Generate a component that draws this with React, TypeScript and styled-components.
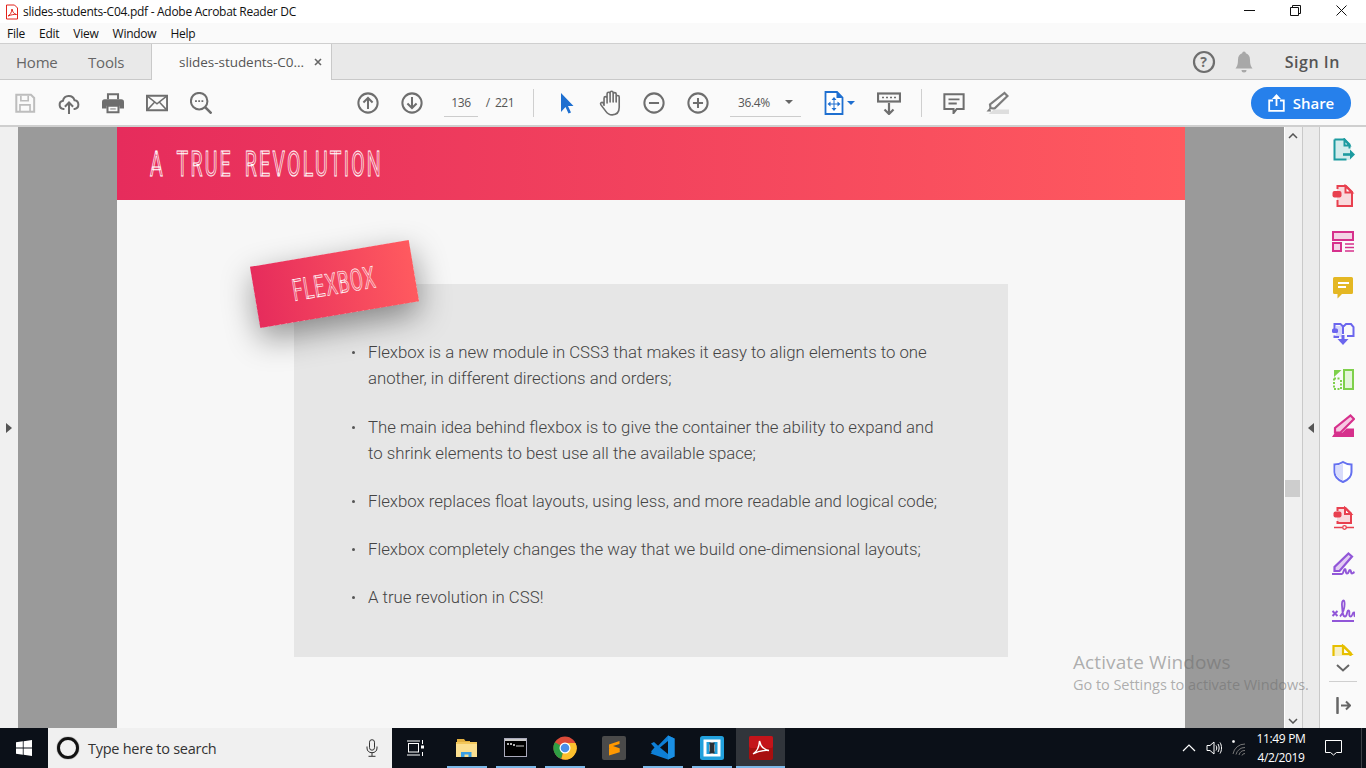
import React from "react";
import styled, { createGlobalStyle } from "styled-components";

const Global = createGlobalStyle`
  html, body { margin: 0; padding: 0; width: 1366px; height: 768px; overflow: hidden; background: #fff; }
  * { box-sizing: border-box; }
  body { font-family: "Open Sans", "Noto Sans", sans-serif; }
  svg { display: block; flex: none; }
`;

const Shell = styled.div`
  width: 1366px; height: 768px; display: flex; flex-direction: column; position: relative; overflow: hidden;
`;

/* Title bar */
const TitleBar = styled.div`
  height: 23px; background: #fff; display: flex; align-items: center; padding-left: 4px; flex: none;
`;
const TitleText = styled.span`
  margin-left: 3px; font-size: 12px; color: #111; letter-spacing: -0.28px; white-space: nowrap;
`;
const WindowControls = styled.div`
  margin-left: auto; display: flex; align-items: center; padding-right: 2px;
`;
const WindowButton = styled.div`
  width: 46px; height: 23px; display: flex; align-items: center; justify-content: center;
  position: relative; top: -1px; color: #111;
`;

/* Menu bar */
const MenuBar = styled.div`
  height: 21px; background: #fafafa; display: flex; align-items: center; gap: 14px; padding-left: 7px; flex: none;
  border-bottom: 1px solid #cfcfcf;
`;
const MenuItem = styled.span`
  font-size: 12px; color: #111; letter-spacing: -0.25px;
`;

/* Tabs */
const TabBar = styled.div`
  height: 36px; background: #e9e9e9; display: flex; align-items: stretch; flex: none; border-bottom: 1px solid #c9c9c9;
`;
const NavTab = styled.div<{ $w: number }>`
  width: ${p => p.$w}px; display: flex; align-items: center; font-size: 15px; color: #666; padding-left: 16px; letter-spacing: -0.2px;
`;
const DocTab = styled.div`
  width: 181px; height: 36px; background: #fafafa; border-left: 1px solid #c9c9c9; border-right: 1px solid #c9c9c9;
  display: flex; align-items: center; padding-left: 27px; font-size: 13.5px; color: #555; gap: 10px; letter-spacing: -0.05px; white-space: nowrap;
`;
const TabRight = styled.div`
  margin-left: auto; display: flex; align-items: center; padding-right: 26px;
`;
const SignIn = styled.span`
  font-size: 16px; font-weight: 600; color: #555; margin-left: 29px; letter-spacing: 0.55px;
`;

/* Toolbar */
const Toolbar = styled.div`
  height: 47px; background: #fafafa; border-bottom: 2px solid #cfcfcf; display: flex; align-items: center; padding-left: 3px; flex: none;
`;
const ToolSlot = styled.div<{ $w?: number; $ml?: number }>`
  width: ${p => p.$w ?? 44}px; margin-left: ${p => p.$ml ?? 0}px; height: 32px; display: flex; align-items: center; justify-content: center; flex: none; gap: 3px;
`;
const PageField = styled.div`
  width: 34px; margin-left: 10px; height: 29px; border-bottom: 1px solid #ccc; font-size: 12px; color: #555; display: flex; align-items: center; justify-content: center; letter-spacing: -0.4px;
`;
const PageTotal = styled.span`
  margin-left: 5px; width: 37px; font-size: 12px; color: #555; letter-spacing: -0.45px; white-space: pre; height: 29px; display: flex; align-items: center;
`;
const ToolSep = styled.div<{ $ml: number }>`
  width: 1px; height: 28px; background: #cfcfcf; margin-left: ${p => p.$ml}px; flex: none;
`;
const ZoomField = styled.div`
  width: 71px; margin-left: 10px; height: 29px; border-bottom: 1px solid #ccc; font-size: 12px; color: #555; display: flex; align-items: center; justify-content: space-between; padding: 0 8px 0 8px; letter-spacing: -0.4px; flex: none;
`;
const Caret = styled.span<{ $c: string }>`
  width: 0; height: 0; border-left: 4px solid transparent; border-right: 4px solid transparent; border-top: 4px solid ${p => p.$c}; flex: none;
`;
const ShareButton = styled.div`
  margin-left: auto; margin-right: 15px; width: 100px; height: 32px; border-radius: 16px; background: #2680eb; color: #fff;
  font-size: 15px; font-weight: 600; display: flex; align-items: center; justify-content: center; gap: 8px; letter-spacing: -0.05px;
`;

/* Main */
const Main = styled.div`
  flex: 1; display: flex; min-height: 0; position: relative;
`;
const LeftRail = styled.div`
  width: 18px; background: #f0f0f0; display: flex; align-items: center; justify-content: center; flex: none;
`;
const RailArrow = styled.span<{ $dir: "left" | "right" }>`
  width: 0; height: 0; border-top: 5.5px solid transparent; border-bottom: 5.5px solid transparent;
  ${p => p.$dir === "right" ? "border-left: 6px solid #555;" : "border-right: 6px solid #555;"}
`;
const DocArea = styled.div`
  width: 1266px; background: #9a9a9a; display: flex; justify-content: flex-start; padding-left: 99px; flex: none; overflow: hidden;
`;
const Page = styled.div`
  width: 1068px; background: #f7f7f7; display: flex; flex-direction: column; flex: none;
`;
const SlideHeader = styled.div`
  height: 73px; flex: none; background: linear-gradient(90deg, #e62c5c 0%, #ff5a5f 100%); display: flex; align-items: center; padding-left: 33px;
`;
const SlideTitle = styled.h1`
  margin: 0; font-family: "Roboto", sans-serif; font-weight: 400; font-size: 35px; line-height: 1; color: rgba(255,255,255,.15);
  -webkit-text-stroke: 0.95px #fff; letter-spacing: 4px; word-spacing: 8.7px; transform: scaleX(0.558); transform-origin: left center; white-space: pre;
  position: relative; top: 1px;
`;
const SlideBody = styled.div`
  flex: 1; position: relative; padding: 84px 0 0 177px;
`;
const Card = styled.div`
  width: 714px; height: 373px; background: #e6e6e6; padding: 55px 50px 0 56px; flex: none;
`;
const BulletList = styled.ul`
  margin: 0; padding: 0; list-style: none; display: flex; flex-direction: column; gap: 22px;
`;
const Bullet = styled.li`
  position: relative; padding-left: 18px; font-family: "Roboto", sans-serif; font-weight: 300; font-size: 16.77px; line-height: 26px; color: #444; width: 620px;
  &::before { content: ""; position: absolute; left: 2px; top: 12px; width: 3px; height: 3px; border-radius: 50%; background: #555; }
  &:nth-child(2) { margin-top: 1px; }
`;
const Badge = styled.div`
  position: absolute; left: 137px; top: 53px; width: 161px; height: 62px; transform: rotate(-9.6deg);
  background: linear-gradient(90deg, #e62c5c 0%, #ff5a5f 100%);
  box-shadow: 0 12px 32px rgba(0,0,0,.42);
  display: flex; align-items: center; justify-content: center;
`;
const BadgeText = styled.span`
  font-family: "Roboto", sans-serif; font-size: 30px; color: rgba(255,255,255,.15); -webkit-text-stroke: 0.7px #fff; letter-spacing: 1.4px; transform: scaleX(0.62); white-space: nowrap; line-height: 1;
`;
const Watermark = styled.div`
  position: absolute; left: 1073px; top: 523px; color: rgba(110,110,110,.55); pointer-events: none; white-space: nowrap; z-index: 5;
`;
const WatermarkBig = styled.div` font-size: 19px; line-height: 24px; letter-spacing: 0.1px; `;
const WatermarkSmall = styled.div` font-size: 14.5px; line-height: 20px; margin-top: 1px; letter-spacing: -0.05px; `;

const ScrollTrack = styled.div`
  width: 17px; background: #f0f0f0; display: flex; flex-direction: column; align-items: center; flex: none; position: relative; margin-left: 1px;
  justify-content: space-between; padding: 6px 1px 4px 0;
`;
const ScrollThumb = styled.div`
  position: absolute; left: 0; top: 353px; width: 15px; height: 17px; background: #cdcdcd;
`;
const CollapseStrip = styled.div`
  width: 18px; background: #ebebeb; border-left: 1px solid #c9c9c9; border-right: 1px solid #c9c9c9; display: flex; align-items: center; justify-content: center; flex: none;
`;
const ToolsPanel = styled.div`
  flex: 1; background: #fafafa; display: flex; flex-direction: column; align-items: stretch;
`;
const ToolsList = styled.div`
  height: 529px; overflow: hidden; flex: none;
`;
const ToolTile = styled.div`
  height: 46px; display: flex; align-items: center; justify-content: center;
`;
const PanelFoot = styled.div`
  flex: 1; display: flex; flex-direction: column; align-items: center; padding-top: 8px;
`;
const PanelRule = styled.div`
  width: 28px; height: 1px; background: #cfcfcf; margin: 9px 0 15px;
`;

/* Taskbar */
const Taskbar = styled.div`
  height: 40px; background: #0b1018; display: flex; align-items: stretch; flex: none; color: #fff; position: relative;
`;
const StartButton = styled.div`
  width: 48px; display: flex; align-items: center; justify-content: center; flex: none;
`;
const SearchBox = styled.div`
  width: 344px; background: #f0f0f0; display: flex; align-items: center; padding-left: 9px; flex: none;
`;
const CortanaRing = styled.div`
  width: 22px; height: 22px; border-radius: 50%; border: 3px solid #111; flex: none; box-shadow: 0 0 1px #000;
`;
const SearchText = styled.span`
  margin-left: 9px; font-size: 14.5px; color: #333; letter-spacing: -0.26px; flex: 1; white-space: nowrap;
`;
const MicSlot = styled.div`
  width: 24px; margin-right: 8px; display: flex; justify-content: center; flex: none;
`;
const TaskSlot = styled.div<{ $w: number; $active?: boolean; $line?: number; $pr?: number }>`
  width: ${p => p.$w}px; flex: none; display: flex; align-items: center; justify-content: center; position: relative;
  padding-bottom: 1px; padding-right: ${p => p.$pr ?? 0}px;
  background: ${p => p.$active ? "#31353b" : "transparent"};
  ${p => p.$line ? `&::after { content: ""; position: absolute; bottom: 0; left: 50%; margin-left: -${p.$line / 2}px; width: ${p.$line}px; height: 2px; background: #7cb8e8; }` : ""}
`;
const Tray = styled.div`
  margin-left: auto; display: flex; align-items: center; flex: none; padding-right: 4px; position: relative;
`;
const TrayIcon = styled.div<{ $w: number }>`
  width: ${p => p.$w}px; display: flex; justify-content: center; align-items: center; flex: none;
`;
const Clock = styled.div`
  width: 62px; margin-right: 4px; font-size: 12px; line-height: 19px; text-align: center; color: #fff; letter-spacing: -0.35px; white-space: nowrap;
`;
const TrayEdge = styled.div`
  width: 1px; height: 40px; background: #3c4046; margin-left: 11px;
`;

/* ---------- icons ---------- */
const I = ({ s = 24, h, children }: { s?: number; h?: number; children: React.ReactNode }) => (
  <svg width={s} height={h ?? s} viewBox="0 0 24 24" fill="none">{children}</svg>
);
const T = ({ children }: { children: React.ReactNode }) => <I s={22}>{children}</I>;
const G = "#6e6e6e";

const PdfMini = () => (
  <svg width="16" height="16" viewBox="0 0 16 16" fill="none">
    <path d="M2.5 1h8l3 3v11h-11z" fill="#fff" stroke="#e2231a" />
    <path d="M4 12c2-1 3.5-3 4-7 .5 3 2 5 4.5 5.5-2.500-.3-5 .2-8.500 1.500z" stroke="#e2231a" strokeWidth="1" fill="none" />
  </svg>
);

const Ic = {
  Save: () => (<T><path d="M2.500 3h16l3.500 3.500V21.500H2.500z" stroke="#bdbdbd" strokeWidth="2.200" /><path d="M7.500 4v5.500h8V4M6.500 21v-7h11v7" stroke="#bdbdbd" strokeWidth="1.800" /></T>),
  Upload: () => (<T><path d="M7 18.500H6a4.500 4.500 0 0 1-.6-8.900 6.500 6.500 0 0 1 12.600-.6 4.800 4.800 0 0 1 .2 9.500H17" stroke={G} strokeWidth="2.200" /><path d="M12 24V12M7.500 16l4.500-4.500 4.500 4.500" stroke={G} strokeWidth="2.200" /></T>),
  Print: () => (<T><path d="M6.500 8V2.500h11V8" stroke={G} strokeWidth="2.200" /><path d="M3 8h18a3 3 0 0 1 3 3v7h-5v-3H5v3H0v-7a3 3 0 0 1 3-3z" fill={G} /><path d="M6 15h12v7H6z" stroke={G} strokeWidth="2.200" /><path d="M9 18.500h6" stroke={G} /></T>),
  Mail: () => (<T><path d="M1 4h22v16H1z" stroke={G} strokeWidth="2.200" /><path d="M1.500 4.500 12 13l10.500-8.500M1.500 19.500l8-8.500M22.500 19.500l-8-8.500" stroke={G} strokeWidth="1.600" /></T>),
  Search: () => (<T><circle cx="10" cy="10" r="9" stroke={G} strokeWidth="2.200" /><path d="m16.500 16.500 7 7" stroke={G} strokeWidth="2.800" /><path d="M5.500 10h2M9 10h2M12.500 10h2" stroke={G} strokeWidth="2" /></T>),
  Up: () => (<T><circle cx="12" cy="12" r="10.500" stroke={G} strokeWidth="2.200" /><path d="M12 18.500V6.500M7 11.500l5-5 5 5" stroke={G} strokeWidth="2.200" /></T>),
  Down: () => (<T><circle cx="12" cy="12" r="10.500" stroke={G} strokeWidth="2.200" /><path d="M12 5.500v12M7 12.500l5 5 5-5" stroke={G} strokeWidth="2.200" /></T>),
  Cursor: () => (<I><path d="M7 2v19l4.500-5 3 6.500 2.500-1-3-6.500H19.500z" fill="#1e6fd0" /></I>),
  Hand: () => (<I s={26}><path d="M6.500 14V7.500a1.400 1.400 0 0 1 2.800 0V12M9.300 11V3.500a1.400 1.400 0 0 1 2.800 0V11M12.100 11V2.500a1.400 1.400 0 0 1 2.800 0V11M14.900 11V3.800a1.400 1.400 0 0 1 2.800 0V11M17.700 11V6.500a1.400 1.400 0 0 1 2.800 0V16c0 4.500-2.500 7-6.500 7-3 0-4.500-1.200-6-3.500l-4.500-6c-.8-1.500 1-2.800 2.200-1.700L6.500 14" stroke={G} strokeWidth="1.500" strokeLinecap="round" /></I>),
  Minus: () => (<T><circle cx="12" cy="12" r="10.500" stroke={G} strokeWidth="2.200" /><path d="M6.500 12h11" stroke={G} strokeWidth="2.200" /></T>),
  Plus: () => (<T><circle cx="12" cy="12" r="10.500" stroke={G} strokeWidth="2.200" /><path d="M6.500 12h11M12 6.500v11" stroke={G} strokeWidth="2.200" /></T>),
  Fit: () => (<svg width="20" height="24" viewBox="0 0 20 24" fill="none"><path d="M1.500 1h11.500l5.500 5.500V23H1.500z" fill="#fff" stroke="#1e6fd0" strokeWidth="1.800" /><path d="M12.500 1v6h6z" fill="#1e6fd0" /><path d="M10 8v10M5 13h10" stroke="#1e6fd0" strokeWidth="1" /><path d="m10 6 2.500 3h-5zM10 20l2.500-3h-5zM3.500 13 6.500 10.500v5zM16.500 13l-3-2.500v5z" fill="#1e6fd0" /></svg>),
  Stamp: () => (<I><rect x="1" y="2.500" width="22" height="8" stroke={G} strokeWidth="2.200" /><path d="M5 6.500h2M9 6.500h2M13 6.500h2M17 6.500h2" stroke={G} strokeWidth="1.600" /><path d="M12 12v11M7.500 18.500 12 23l4.500-4.500" stroke={G} strokeWidth="2.200" /></I>),
  Comment: () => (<T><path d="M1.500 2.500h21v16h-7.500l-3.500 4.500v-4.500h-10z" stroke={G} strokeWidth="2.200" /><path d="M6 8h12M6 12.500h9" stroke={G} strokeWidth="2" /></T>),
  Marker: () => (<I><path d="M19.500 2l3 3-13 12.500-4-.5-.5-3.500z" stroke="#7d7d7d" strokeWidth="2.200" /><path d="M5 16.500 1.500 20.500h4.500z" fill="#7d7d7d" /><path d="M9 18.500h15V23H3.500z" fill="#dedede" /></I>),
  Help: () => (<I><circle cx="12" cy="12" r="10" stroke={G} strokeWidth="2.200" /></I>),
  Bell: () => (<I><path d="M12 1.500a1.800 1.800 0 0 1 1.800 1.800c3 .9 4.200 3.200 4.200 6.700 0 4.500 1 6.500 2.500 8.500h-17C5 16.500 6 14.500 6 10c0-3.500 1.200-5.800 4.200-6.700A1.800 1.800 0 0 1 12 1.500z" fill="#a8a8a8" /><path d="M9.500 20a2.500 2.500 0 0 0 5 0z" fill="#a8a8a8" /></I>),
  Share: () => (<svg width="17" height="18" viewBox="0 0 17 18" fill="none"><path d="M5 6.500H1.200v10.300h14.600V6.500H12" stroke="#fff" strokeWidth="1.800" /><path d="M8.500 12V1.500" stroke="#fff" strokeWidth="1.800" /><path d="M8.500 0 13 5H4z" fill="#fff" /></svg>),
};

const Side = {
  Export: () => (<I><path d="M4 2h9l6 6v14H4z" fill="#d3ecec" /><path d="M3.500 1.500h10l5 5v4M3.500 1.500v20h12" stroke="#1d9ba0" strokeWidth="2" /><path d="M13.500 1.500v6h5z" stroke="#1d9ba0" strokeWidth="2" fill="#fff" /><path d="M12 16.500h8" stroke="#1d9ba0" strokeWidth="2.600" /><path d="M19 11.500l5 5-5 5z" fill="#1d9ba0" /></I>),
  Create: () => (<I><path d="M6 5V2h9l6 6v14H6v-6" fill="#f9d9dc" /><path d="M6.500 5V2h8.500l6 6v14H6.500v-6" stroke="#e8404f" strokeWidth="2" /><path d="M14.500 2v6.500H21z" stroke="#e8404f" strokeWidth="2" fill="#fff" /><rect x="1.500" y="7" width="9" height="6.500" rx="2" fill="#e8404f" /></I>),
  Edit: () => (<I><rect x="2" y="2" width="20" height="8" stroke="#d6308c" strokeWidth="2" fill="#f4d3e6" /><rect x="2" y="13" width="8" height="8" stroke="#d6308c" strokeWidth="2" fill="#f4d3e6" /><path d="M14 14h9M14 17.500h9M14 21h9" stroke="#d6308c" strokeWidth="1.400" /></I>),
  Note: () => (<I><path d="M3.500 1h17A1.500 1.500 0 0 1 22 2.500v14a1.500 1.500 0 0 1-1.500 1.500H11l-4.500 4.500V18h-3A1.500 1.500 0 0 1 2 16.500v-14A1.500 1.500 0 0 1 3.500 1z" fill="#e4b723" /><path d="M7 7h11M7 11h8" stroke="#fff" strokeWidth="2" /></I>),
  Combine: () => (<I><path d="M5 4h6v11H5z" fill="#d9d9fb" /><path d="M3.500 8V2h6l2 2 .5 0h1l2-2h5l2.500 3v9H16M3.500 13.500V15H8M12 3v9" stroke="#6b66ee" strokeWidth="2" /><rect x="1" y="6.500" width="6" height="4.500" rx="1.500" fill="#6b66ee" /><path d="M12 13v5" stroke="#6b66ee" strokeWidth="3" /><path d="M6.500 17h11L12 23z" fill="#6b66ee" /></I>),
  Organize: () => (<I><rect x="13" y="2" width="9" height="19" stroke="#7ed04b" strokeWidth="2" fill="#e4f5da" /><path d="M3 10.500h7M3 10.500V21h7V10.500" stroke="#7ed04b" strokeWidth="2" strokeDasharray="2 1.500" /><path d="M3 2h7.500L3 9z" fill="#7ed04b" /></I>),
  Sign: () => (<I><path d="M19.500 1.500l3.500 3.500L9.500 18.500H4v-4.500z" fill="#f7c9e2" stroke="#d6308c" strokeWidth="2.200" /><path d="M1 23l3-4.500h7.500l4-4H23V23z" fill="#d6308c" /></I>),
  Shield: () => (<I><path d="M12 2c3 2 6 2.500 8.500 2.500V12c0 4.500-3.500 8-8.500 10-5-2-8.500-5.500-8.500-10V4.500C6 4.500 9 4 12 2z" stroke="#6470f0" strokeWidth="2" fill="#fff" /><path d="M4.500 5.500c3 0 5.500-.8 7.500-2v17c-4.500-2-7.500-5-7.500-8.500z" fill="#d9dcfb" /></I>),
  Compress: () => (<I><path d="M6 5V2h8.500l5.500 5.500V17H6v-2" fill="#f9d9dc" /><path d="M6.500 5V2h8l5.500 5.500V17H6.500v-2" stroke="#e8404f" strokeWidth="2" /><path d="M14 2v6h6z" stroke="#e8404f" strokeWidth="2" fill="#fff" /><rect x="2.500" y="5.500" width="8" height="6" rx="2" fill="#e8404f" /><path d="M3 21.500h8.500M15 21.500h8" stroke="#e8404f" strokeWidth="1.600" /><circle cx="13.500" cy="21.500" r="1.800" stroke="#e8404f" strokeWidth="1.300" /></I>),
  Fill: () => (<I><path d="M17.500 1.500l3.500 3L8.500 19H3.500v-4z" fill="#e3cdf3" stroke="#9156d8" strokeWidth="2.200" /><path d="M1 22h10c1.500 0 1.500-5 3-5s0 4.500 2 4.500 1.500-3.500 3-3.500.5 3.500 2 3.500 1.500-1 2.500-1.500" stroke="#9156d8" strokeWidth="2" /></I>),
  Sig: () => (<I><path d="M1.500 13l5 5M6.500 13l-5 5" stroke="#9156d8" strokeWidth="2" /><path d="M9 18.500c3-3 5-9 4.500-14-.3-3.500-3-2.500-2.500 3s.5 11 3 11 1.500-6 3.500-6-.5 6 2 6 1.500-4 3.500-4-1 3 1 4" stroke="#9156d8" strokeWidth="1.800" /><path d="M1 23h22" stroke="#9156d8" strokeWidth="2" /></I>),
  Cut: () => (<I><path d="M3 2h10l7 7v15H3z" fill="#f7f0c7" /><path d="M2.500 24V2h10l7 7v15" stroke="#e6bf00" strokeWidth="2.200" /><path d="M12 2v8h8z" stroke="#e6bf00" strokeWidth="2.200" fill="#fff" /></I>),
};

const Win = () => (
  <svg width="16" height="16" viewBox="0 0 16 16"><path d="M0 2.300 6.800 1.300V7.500H0zM7.600 1.200 16 0V7.500H7.600zM0 8.400H6.800V14.700L0 13.700zM7.600 8.400H16V16L7.600 14.800z" fill="#fff" /></svg>
);
const Mic = () => (
  <svg width="12" height="18" viewBox="0 0 12 18" fill="none"><rect x="3.500" y="0.700" width="5" height="10.500" rx="2.500" stroke="#333" /><path d="M1 7.500V9c0 3 2 4.700 5 4.700S11 12 11 9V7.500M6 13.700V17M2.500 17.300h7" stroke="#333" /></svg>
);
const Task = {
  View: () => (<svg width="18" height="16" viewBox="0 0 18 16" fill="none"><rect x="1.500" y="3.500" width="10" height="8.500" stroke="#fff" /><path d="M0 1h13M0 15h13M15.500 0v4M15.500 12v4" stroke="#fff" /><rect x="14" y="5.500" width="3" height="3" fill="#fff" /></svg>),
  Explorer: () => (<svg width="21" height="18" viewBox="0 0 21 18"><path d="M1 0h7l1.500 2H14v2H1z" fill="#e3b040" /><path d="M0 3h21v15H0z" fill="#fbdf90" /><path d="M0 3h21v2H0z" fill="#f2c75c" /><path d="M5 18v-5h10.500v5h-3v-2.500h-4V18z" fill="#3a9fe4" /></svg>),
  Cmd: () => (<svg width="23" height="19" viewBox="0 0 23 19" fill="none"><rect x=".5" y=".5" width="22" height="18" fill="#000" stroke="#aab" /><rect x="1" y="1" width="21" height="2" fill="#c9c9c9" /><path d="M3 6h2M6 6h2M9 7h2" stroke="#eee" strokeWidth="1.300" /><path d="M12 8h8" stroke="#ccc" /></svg>),
  Chrome: () => (<svg width="24" height="24" viewBox="0 0 24 24"><circle cx="12" cy="12" r="11.500" fill="#dd4b39" /><path d="M12 12 1.900 6.300A11.500 11.500 0 0 0 8 22.800z" fill="#2f9e44" /><path d="M12 7h10.500A11.500 11.500 0 0 1 8.500 23z" fill="#fbc02d" /><circle cx="12" cy="12" r="5.500" fill="#fff" /><circle cx="12" cy="12" r="4.300" fill="#4a8fe8" /></svg>),
  Sublime: () => (<svg width="24" height="24" viewBox="0 0 24 24"><rect width="24" height="24" rx="2" fill="#4a4a4a" /><path d="M17.500 5 7 8.500v4.300l10.500 3.400v-4L11 10l6.500-2zM7 13v4.200L17.500 14v-1z" fill="#ff9800" /><path d="M17.500 12.500v3.800L7 19.500v-4.200z" fill="#ff9800" /></svg>),
  Code: () => (<svg width="25" height="25" viewBox="0 0 25 25"><path d="M18 0.500 24.500 3.500V21.500L18 24.500 0.500 18.500 2 17z" fill="#0e7fd6" /><path d="M18 0.500V24.500L24.500 21.500V3.500z" fill="#1a8fe3" /><path d="M18 6 10 12.500l8 6.500z" fill="#0b1018" /><path d="M1 8.500l3-1.500 6 5.500-6 5.500-3-1.500 3.500-4z" fill="#0e7fd6" /></svg>),
  Brackets: () => (<svg width="24" height="24" viewBox="0 0 24 24"><rect width="24" height="24" rx="2.500" fill="#22a0dc" /><rect x="3.500" y="3.500" width="17" height="17" fill="#fff" /><path d="M6.500 6h4v2.500H9V15.500h1.500V18h-4zM17.500 6h-4v2.500H15V15.500h-1.500V18h4z" fill="#22a0dc" /><rect x="9.500" y="6.500" width="5" height="11" fill="#2a2f36" /></svg>),
  Acrobat: () => (<svg width="24" height="24" viewBox="0 0 24 24" fill="none"><rect width="24" height="24" rx="2" fill="#a80f0f" /><rect width="24" height="12" rx="2" fill="#c4141a" /><path d="M4 18c3.500-2 6-6 6.500-13 1 5 3.500 8.500 9.500 9.500-5-.5-10.500 .5-16 3.500z" stroke="#fff" strokeWidth="1.400" /></svg>),
};

const sideIcons = [Side.Export, Side.Create, Side.Edit, Side.Note, Side.Combine, Side.Organize, Side.Sign, Side.Shield, Side.Compress, Side.Fill, Side.Sig, Side.Cut];
const bullets = [
  <>Flexbox is a new module in CSS3 that makes it easy to align elements to one<br />another, in different directions and orders;</>,
  <>The main idea behind flexbox is to give the container the ability to expand and<br />to shrink elements to best use all the available space;</>,
  <>Flexbox replaces float layouts, using less, and more readable and logical code;</>,
  <>Flexbox completely changes the way that we build one-dimensional layouts;</>,
  <>A true revolution in CSS!</>,
];

const HelpMark = styled.span`
  position: absolute; font-size: 14px; font-weight: 700; color: #6e6e6e; line-height: 1;
`;
const HelpWrap = styled.div`
  position: relative; width: 24px; height: 24px; display: flex; align-items: center; justify-content: center;
`;
const BellWrap = styled.div` margin-left: 16px; `;

export default function App() {
  return (
    <Shell>
      <Global />
      <TitleBar>
        <PdfMini />
        <TitleText>slides-students-C04.pdf - Adobe Acrobat Reader DC</TitleText>
        <WindowControls>
          <WindowButton><svg width="11" height="1"><path d="M0 .5h11" stroke="#111" /></svg></WindowButton>
          <WindowButton><svg width="11" height="11" fill="none"><path d="M.5 2.500h8v8h-8zM2.500 2.500v-2h8v8h-2" stroke="#111" /></svg></WindowButton>
          <WindowButton><svg width="11" height="11"><path d="M.5.500l10 10M10.500.500l-10 10" stroke="#111" /></svg></WindowButton>
        </WindowControls>
      </TitleBar>
      <MenuBar>
        {["File", "Edit", "View", "Window", "Help"].map(m => <MenuItem key={m}>{m}</MenuItem>)}
      </MenuBar>
      <TabBar>
        <NavTab $w={72}>Home</NavTab>
        <NavTab $w={79}>Tools</NavTab>
        <DocTab>slides-students-C0...
          <svg width="8" height="8"><path d="M1 1l6 6M7 1L1 7" stroke="#666" strokeWidth="1.600" /></svg>
        </DocTab>
        <TabRight>
          <HelpWrap><Ic.Help /><HelpMark>?</HelpMark></HelpWrap>
          <BellWrap><Ic.Bell /></BellWrap>
          <SignIn>Sign In</SignIn>
        </TabRight>
      </TabBar>
      <Toolbar>
        <ToolSlot><Ic.Save /></ToolSlot>
        <ToolSlot><Ic.Upload /></ToolSlot>
        <ToolSlot><Ic.Print /></ToolSlot>
        <ToolSlot><Ic.Mail /></ToolSlot>
        <ToolSlot><Ic.Search /></ToolSlot>
        <ToolSlot $ml={123}><Ic.Up /></ToolSlot>
        <ToolSlot><Ic.Down /></ToolSlot>
        <PageField>136</PageField>
        <PageTotal> /  221</PageTotal>
        <ToolSep $ml={13} />
        <ToolSlot $ml={10}><Ic.Cursor /></ToolSlot>
        <ToolSlot><Ic.Hand /></ToolSlot>
        <ToolSlot><Ic.Minus /></ToolSlot>
        <ToolSlot><Ic.Plus /></ToolSlot>
        <ZoomField>36.4%<Caret $c="#666" /></ZoomField>
        <ToolSlot $ml={14} $w={48}><Ic.Fit /><Caret $c="#1e6fd0" /></ToolSlot>
        <ToolSlot $ml={4}><Ic.Stamp /></ToolSlot>
        <ToolSep $ml={10} />
        <ToolSlot $ml={10} $w={43}><Ic.Comment /></ToolSlot>
        <ToolSlot><Ic.Marker /></ToolSlot>
        <ShareButton><Ic.Share />Share</ShareButton>
      </Toolbar>
      <Main>
        <LeftRail><RailArrow $dir="right" /></LeftRail>
        <DocArea>
          <Page>
            <SlideHeader><SlideTitle>A TRUE REVOLUTION</SlideTitle></SlideHeader>
            <SlideBody>
              <Card>
                <BulletList>
                  {bullets.map((b, i) => <Bullet key={i}>{b}</Bullet>)}
                </BulletList>
              </Card>
              <Badge><BadgeText>FLEXBOX</BadgeText></Badge>
            </SlideBody>
          </Page>
        </DocArea>
        <ScrollTrack>
          <svg width="10" height="6"><path d="M1 5l4-4 4 4" stroke="#555" strokeWidth="1.500" fill="none" /></svg>
          <ScrollThumb />
          <svg width="10" height="6"><path d="M1 1l4 4 4-4" stroke="#555" strokeWidth="1.500" fill="none" /></svg>
        </ScrollTrack>
        <CollapseStrip><RailArrow $dir="left" /></CollapseStrip>
        <ToolsPanel>
          <ToolsList>
            {sideIcons.map((Ico, i) => <ToolTile key={i}><Ico /></ToolTile>)}
          </ToolsList>
          <PanelFoot>
            <svg width="14" height="8"><path d="M1 1l6 5.500L13 1" stroke="#666" strokeWidth="2" fill="none" /></svg>
            <PanelRule />
            <svg width="15" height="17" fill="none"><path d="M1.500 1v15" stroke="#666" strokeWidth="2.500" strokeLinecap="round" /><path d="M5 8.500h9M10 4.500l4 4-4 4" stroke="#666" strokeWidth="2" /></svg>
          </PanelFoot>
        </ToolsPanel>
        <Watermark>
          <WatermarkBig>Activate Windows</WatermarkBig>
          <WatermarkSmall>Go to Settings to activate Windows.</WatermarkSmall>
        </Watermark>
      </Main>
      <Taskbar>
        <StartButton><Win /></StartButton>
        <SearchBox>
          <CortanaRing />
          <SearchText>Type here to search</SearchText>
          <MicSlot><Mic /></MicSlot>
        </SearchBox>
        <TaskSlot $w={50} $pr={3}><Task.View /></TaskSlot>
        <TaskSlot $w={49} $line={40}><Task.Explorer /></TaskSlot>
        <TaskSlot $w={49} $line={40}><Task.Cmd /></TaskSlot>
        <TaskSlot $w={49} $line={40}><Task.Chrome /></TaskSlot>
        <TaskSlot $w={49}><Task.Sublime /></TaskSlot>
        <TaskSlot $w={49} $line={40}><Task.Code /></TaskSlot>
        <TaskSlot $w={49} $line={40}><Task.Brackets /></TaskSlot>
        <TaskSlot $w={49} $active $line={49}><Task.Acrobat /></TaskSlot>
        <Tray>
          <TrayIcon $w={26}><svg width="14" height="8" fill="none"><path d="M1 7l6-6 6 6" stroke="#fff" strokeWidth="1.200" /></svg></TrayIcon>
          <TrayIcon $w={24}><svg width="16" height="14" fill="none"><path d="M1 4.500h3L8 1v12L4 9.500H1z" stroke="#fff" /><path d="M10 4.500c1 1.500 1 3.500 0 5M12 3c1.500 2.500 1.500 5.500 0 8M14 1.500c2 3 2 8 0 11" stroke="#fff" /></svg></TrayIcon>
          <TrayIcon $w={24}><svg width="16" height="16" fill="none"><path d="M2 1.500h3M3.500 0v3M2.500.500l2 2M4.500.500l-2 2" stroke="#fff" strokeWidth=".8" /><path d="M3 14a12 12 0 0 1 12-10M6 14.500a9 9 0 0 1 9-7M9 15a6 6 0 0 1 6-4.500M12 15.500a3 3 0 0 1 3-2" stroke="#777" /></svg></TrayIcon>
          <Clock>11:49 PM<br />4/2/2019</Clock>
          <TrayIcon $w={34}><svg width="17" height="16" fill="none"><path d="M.5.500h16v12h-5L8.500 15l-3-2.500h-5z" stroke="#fff" /></svg></TrayIcon>
          <TrayEdge />
        </Tray>
      </Taskbar>
    </Shell>
  );
}
